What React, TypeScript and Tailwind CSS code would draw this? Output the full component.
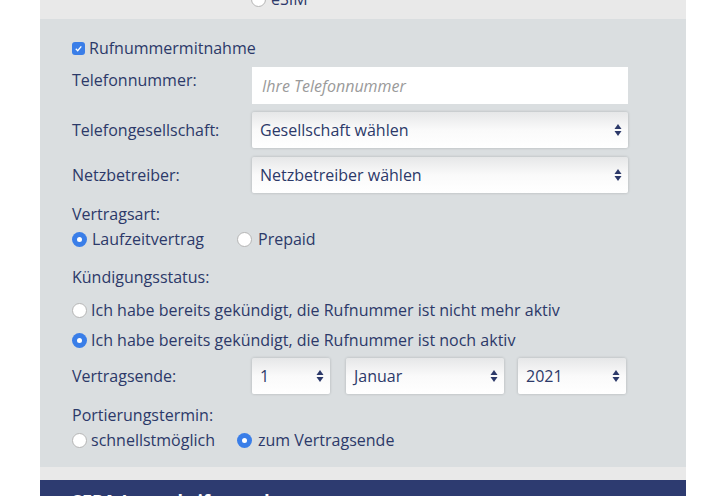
import React from 'react';

const navy = 'text-[#2c3969]';

function Radio({ checked }: { checked?: boolean }) {
  if (checked) {
    return (
      <span className="w-[15px] h-[15px] rounded-full bg-[#3a7ee8] flex items-center justify-center flex-shrink-0">
        <span className="w-[5px] h-[5px] rounded-full bg-white" />
      </span>
    );
  }
  return <span className="w-[15px] h-[15px] rounded-full bg-white border border-[#b5b5b5] flex-shrink-0" />;
}

function Arrows() {
  return (
    <svg width="8" height="14" viewBox="0 0 8 14" className="flex-shrink-0">
      <path d="M4 1 L7.5 6 L0.5 6 Z" fill="#2c3969" />
      <path d="M4 13 L7.5 8 L0.5 8 Z" fill="#2c3969" />
    </svg>
  );
}

function Select({ value, className }: { value: string; className: string }) {
  return (
    <div
      className={`h-[36px] flex items-center justify-between pl-[8px] pr-[6px] rounded-[2px] bg-gradient-to-b from-[#e6e7e8] via-[#fafafa] to-white shadow-[0_0_3px_rgba(0,0,0,0.2)] ${className}`}
    >
      <span className={navy}>{value}</span>
      <Arrows />
    </div>
  );
}

export default function App() {
  return (
    <div className="h-[496px] overflow-hidden bg-white text-[16px] leading-[22px]" style={{ fontFamily: '"Open Sans", "Noto Sans", sans-serif' }}>
      <div className={`mx-[40px] w-[646px] ${navy}`}>
        {/* previous section tail */}
        <div className="h-[19px] bg-[#e9e9e9] overflow-hidden">
          <div className="flex items-center gap-[5px] pl-[211px] -mt-[12px]">
            <Radio />
            <span>eSIM</span>
          </div>
        </div>

        {/* Rufnummermitnahme */}
        <div className="bg-[#dadee0] pl-[32px] pt-[37px] pb-[16px]">
          <label className="flex items-center gap-[4px] h-[22px] -mt-[19px]">
            <span className="w-[13px] h-[13px] rounded-[3px] bg-[#3a7ee8] flex items-center justify-center">
              <svg width="9" height="9" viewBox="0 0 9 9">
                <path d="M1.8 4.8 L3.7 6.7 L7.3 2.3" stroke="white" strokeWidth="1.3" fill="none" />
              </svg>
            </span>
            <span>Rufnummermitnahme</span>
          </label>

          <div className="flex items-center mt-[8px]">
            <span className="w-[180px] -mt-[11px]">Telefonnummer:</span>
            <div className="w-[376px] h-[37px] bg-white flex items-center pl-[10px]">
              <span className="italic text-[#9a9a9a]">Ihre Telefonnummer</span>
            </div>
          </div>

          <div className="flex items-center mt-[8px]">
            <span className="w-[180px]">Telefongesellschaft:</span>
            <Select value="Gesellschaft wählen" className="w-[376px]" />
          </div>

          <div className="flex items-center mt-[9px]">
            <span className="w-[180px]">Netzbetreiber:</span>
            <Select value="Netzbetreiber wählen" className="w-[376px]" />
          </div>

          <div className="mt-[10px]">Vertragsart:</div>
          <div className="flex items-center mt-[3px]">
            <label className="flex items-center gap-[5px] w-[165px]">
              <Radio checked />
              <span>Laufzeitvertrag</span>
            </label>
            <label className="flex items-center gap-[6px]">
              <Radio />
              <span>Prepaid</span>
            </label>
          </div>

          <div className="mt-[16px]">Kündigungsstatus:</div>
          <label className="flex items-center gap-[4px] mt-[11px]">
            <Radio />
            <span>Ich habe bereits gekündigt, die Rufnummer ist nicht mehr aktiv</span>
          </label>
          <label className="flex items-center gap-[4px] mt-[8px]">
            <Radio checked />
            <span>Ich habe bereits gekündigt, die Rufnummer ist noch aktiv</span>
          </label>

          <div className="flex items-center mt-[7px]">
            <span className="w-[180px]">Vertragsende:</span>
            <div className="flex items-center gap-[16px]">
              <Select value="1" className="w-[78px]" />
              <Select value="Januar" className="w-[158px]" />
              <Select value="2021" className="w-[108px] -ml-[2px]" />
            </div>
          </div>

          <div className="mt-[10px]">Portierungstermin:</div>
          <div className="flex items-center mt-[3px]">
            <label className="flex items-center gap-[4px] w-[165px]">
              <Radio />
              <span>schnellstmöglich</span>
            </label>
            <label className="flex items-center gap-[6px]">
              <Radio checked />
              <span>zum Vertragsende</span>
            </label>
          </div>
        </div>

        <div className="h-[13px] bg-[#e9e9e9]" />

        {/* next section header */}
        <div className="bg-[#2d3b70] h-[40px] pl-[32px] pt-[10px]">
          <span className="text-white font-bold text-[18px]">SEPA-Lastschriftmandat</span>
        </div>
      </div>
    </div>
  );
}
